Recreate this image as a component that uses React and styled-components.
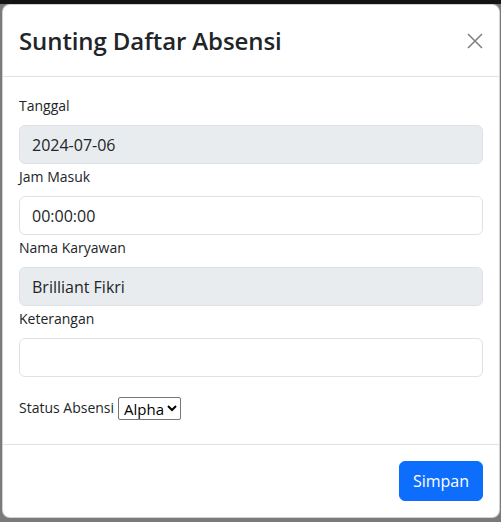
import React from 'react'
import styled, { createGlobalStyle } from 'styled-components'

const GlobalStyle = createGlobalStyle`
  html, body {
    margin: 0;
    background: #7a7a7a;
  }
  * {
    box-sizing: border-box;
  }
`

const Backdrop = styled.div`
  min-height: 522px;
  border-top: 4px solid #131313;
  padding: 0 1px 0 2px;
  font-family: "Open Sans", "Noto Sans", "Liberation Sans", sans-serif;
  color: #212529;
`

const ModalBox = styled.div`
  width: 498px;
  background: #fff;
  border: 1px solid rgba(0, 0, 0, 0.175);
  border-radius: 8px;
  overflow: hidden;
`

const Header = styled.div`
  display: flex;
  align-items: center;
  justify-content: space-between;
  padding: 16px;
  border-bottom: 1px solid #dee2e6;
`

const Title = styled.h2`
  margin: 0;
  font-size: 24px;
  line-height: 39px;
  font-weight: 600;
  letter-spacing: -0.1px;
`

const CloseButton = styled.button`
  display: flex;
  align-items: center;
  justify-content: center;
  width: 24px;
  height: 24px;
  margin-right: -4px;
  padding: 0;
  border: none;
  background: transparent;
  color: #000;
  opacity: 0.5;
  cursor: pointer;
`

const Body = styled.div`
  padding: 16px;
`

const Label = styled.label`
  display: block;
  font-size: 14px;
  line-height: 25px;
  margin-bottom: 7px;
`

const Input = styled.input`
  display: block;
  width: 100%;
  height: 39px;
  margin: 0;
  padding: 0 12px;
  font-family: inherit;
  font-size: 16px;
  color: #212529;
  background: ${props => (props.disabled ? '#e9ecef' : '#fff')};
  border: 1px solid #dee2e6;
  border-radius: 6px;
  outline: none;
`

const StatusRow = styled.div`
  margin: 19px 0 8px;
  font-size: 14px;
  line-height: 24px;
  display: flex;
  align-items: center;
`

const Select = styled.select`
  height: 23px;
  margin-left: 4px;
  padding: 0 0 0 1px;
  font-family: inherit;
  font-size: 15px;
  color: #000;
  background: #fff;
  border: 1px solid #767676;
  border-radius: 2px;
`

const Footer = styled.div`
  display: flex;
  justify-content: flex-end;
  padding: 12px;
  border-top: 1px solid #dee2e6;
`

const Button = styled.button`
  margin: 4px;
  height: 40px;
  padding: 0 13px;
  font-family: inherit;
  font-size: 16px;
  color: #fff;
  background: #0d6efd;
  border: 1px solid #0d6efd;
  border-radius: 6px;
  cursor: pointer;
`

const fields = [
  { label: 'Tanggal', value: '2024-07-06', disabled: true },
  { label: 'Jam Masuk', value: '00:00:00' },
  { label: 'Nama Karyawan', value: 'Brilliant Fikri', disabled: true },
  { label: 'Keterangan', value: '' },
]

export default function App() {
  return (
    <>
      <GlobalStyle />
      <Backdrop>
        <ModalBox>
          <Header>
            <Title>Sunting Daftar Absensi</Title>
            <CloseButton aria-label="Close">
              <svg width="16" height="16" viewBox="0 0 16 16">
                <path d="M1 1L15 15M15 1L1 15" stroke="currentColor" strokeWidth="1.5" />
              </svg>
            </CloseButton>
          </Header>
          <Body>
            {fields.map(f => (
              <div key={f.label}>
                <Label>{f.label}</Label>
                <Input defaultValue={f.value} disabled={f.disabled} />
              </div>
            ))}
            <StatusRow>
              Status Absensi
              <Select defaultValue="Alpha">
                <option>Alpha</option>
                <option>Hadir</option>
                <option>Izin</option>
                <option>Sakit</option>
              </Select>
            </StatusRow>
          </Body>
          <Footer>
            <Button>Simpan</Button>
          </Footer>
        </ModalBox>
      </Backdrop>
    </>
  )
}
